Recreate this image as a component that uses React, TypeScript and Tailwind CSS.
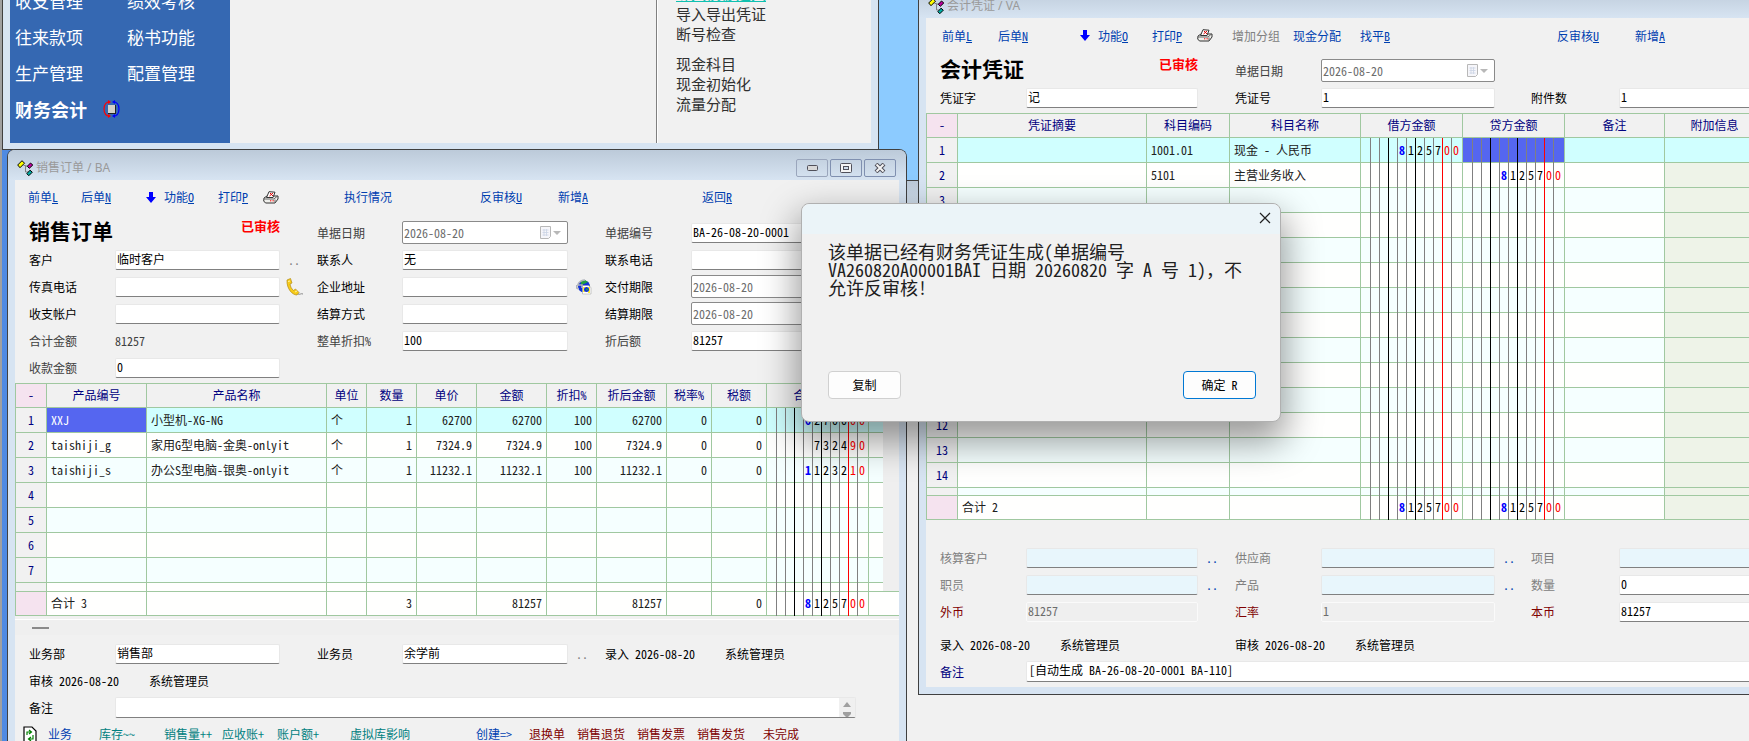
import type { ReactNode } from 'react';
import clsx from 'clsx';

const slotLines = [
  '', 'border-[#808080]', 'border-[#808080]', 'border-black', 'border-[#808080]', 'border-[#808080]',
  'border-black', 'border-[#808080]', 'border-[#808080]', 'border-[#ff0000]', 'border-[#808080]',
];

/* ---------- icons ---------- */

function NodesIcon() {
  return (
    <svg width="17" height="17" viewBox="0 0 17 17" className="shrink-0">
      <path d="M6.500 5.500h2v6.500h2.500M8.500 6h3" stroke="#808080" fill="none" />
      <path d="M5 .7l2.500 2.500L3 7.700.7 5z" fill="#ffff00" stroke="#000" />
      <path d="M13.500 3l2.300 2-3.500 3.300-2-2z" fill="#c000a0" stroke="#000" />
      <path d="M13 10.200l2.300 2-3.500 3.500-2-2z" fill="#00b0a8" stroke="#000" />
    </svg>
  );
}

function DownArrow() {
  return (
    <svg width="10" height="11" viewBox="0 0 10 11" className="shrink-0">
      <path d="M3 0h4v5h3L5 11 0 5h3z" fill="#0000ff" />
    </svg>
  );
}

function Printer() {
  return (
    <svg width="16" height="13" viewBox="0 0 16 13" className="shrink-0">
      <path d="M1 7l3-2h7l4 0v3l-3 4H2.500L.7 10z" fill="#f0f0ec" stroke="#333" />
      <path d="M3.500 6.500L6 .7l6 .5L10 6.500z" fill="#fff" stroke="#333" />
      <path d="M7 2l3 3M10 2L6.500 5" stroke="#e00000" />
      <path d="M1 8h10l3.500-3M12 8.500v3" stroke="#666" fill="none" />
      <path d="M7 9.800h1.300M9.500 9.800h1.300" stroke="#ff0000" />
    </svg>
  );
}

function PhoneIcon() {
  return (
    <svg width="18" height="18" viewBox="0 0 18 18">
      <path d="M1 2l3.500-1.500 1.500 4.500-2 1c.5 3 1.500 4.500 3.500 6.500l2-1.500 3.500 3.500-2 2.500C6.500 17 .5 11 1 2z" fill="#f8cc18" stroke="#b08a18" strokeWidth="0.700" />
      <path d="M2 3.500l2-.5M9 14l2-1" stroke="#fff3a0" />
      <path d="M12 16c2 1 3-1 5 0" stroke="#888" fill="none" />
    </svg>
  );
}

function GlobeIcon() {
  return (
    <svg width="16" height="16" viewBox="0 0 16 16">
      <path d="M1 6l4-4 7 0 2 4H1z" fill="#c8ccd4" />
      <circle cx="8" cy="7.500" r="6" fill="#1030d8" />
      <path d="M5 2l4-1 3 2-4 2-3 1z" fill="#20a040" />
      <path d="M.7 6v3l2 1M2 5c2-3 4-4 7-4M1 6h5v3" stroke="#b0b4bc" strokeWidth="1.500" fill="none" />
      <path d="M6.500 6.500h6l2.500 2v6.500H6.500z" fill="#fff" stroke="#999" strokeWidth="0.500" />
      <path d="M7 8h2v5H7zM12 8h2v6h-2z" fill="#ffee30" />
      <circle cx="10.500" cy="10.500" r="2.500" fill="#1030d8" />
      <circle cx="11" cy="10.500" r="1" fill="#20a040" />
    </svg>
  );
}

function TargetIcon() {
  return (
    <svg width="17" height="18" viewBox="0 0 17 18">
      <path d="M7 1.500C3 2 1 5 1 9s2 7 6 7.500" stroke="#ff0000" strokeWidth="1.200" fill="none" />
      <path d="M10 1.500c4 .5 6 3.500 6 7.500s-2 7-6 7.500" stroke="#0000ff" strokeWidth="1.200" fill="none" />
      <path d="M5 0l3 2-3 2zM5 14l3 2-3 2z" fill="#ff0000" />
      <path d="M12 0L9 2l3 2zM12 14l-3 2 3 2z" fill="#0000ff" />
      <rect x="5" y="5" width="8" height="9" fill="#222" />
      <rect x="5" y="5" width="7" height="8" fill="#d4d0c8" />
    </svg>
  );
}

function CalendarIcon() {
  return (
    <svg width="21" height="13" viewBox="0 0 21 13" className="mr-1.5 shrink-0">
      <path d="M.5.5h10v10l-2 2h-8z" fill="#f6f6fa" stroke="#b8b8b8" />
      <path d="M2.500 4h6M2.500 6.500h6M2.500 9h6M4 3v7M6.500 3v7" stroke="#ccd4e4" strokeWidth="0.800" />
      <path d="M13 5h8l-4 4z" fill="#b8b8b8" />
    </svg>
  );
}

function RefreshDoc() {
  return (
    <svg width="14" height="16" viewBox="0 0 14 16" className="shrink-0">
      <path d="M1 1h8l4 4v11H1z" fill="#fff" stroke="#000" strokeWidth="1.200" />
      <path d="M4 9V6h4M6 4l2.500 2L6 8M10 9v4H6M8 11l-2.500 2L8 15" stroke="#008000" strokeWidth="1.200" fill="none" />
    </svg>
  );
}

/* ---------- form parts ---------- */

function TextField({
  id,
  label,
  value = '',
  tone = 'text-black',
  look = 'white',
}: {
  id: string;
  label: string;
  value?: string;
  tone?: string;
  look?: 'white' | 'blue' | 'flat';
}) {
  return (
    <>
      <label htmlFor={id} className={tone}>{label}</label>
      <input
        id={id}
        defaultValue={value}
        className={clsx(
          'h-5 w-full rounded-xs border px-px pb-0.5 outline-none',
          look === 'white' && 'border-[#e8e8e8] border-b-[#808080] bg-white',
          look === 'blue' && 'border-[#e8e8e8] border-b-[#808080] bg-[#e8f6fc]',
          look === 'flat' && 'border-[#fafafa] bg-[#efefef] text-[#6d6d6d]',
        )}
      />
    </>
  );
}

function DateField({ id, label, tone = 'text-black' }: { id: string; label: string; tone?: string }) {
  return (
    <>
      <label htmlFor={id} className={tone}>{label}</label>
      <div className="flex h-[23px] items-center rounded-xs border border-[#8a8a8a] bg-white">
        <input id={id} defaultValue="2026-08-20" className="min-w-0 flex-1 px-px text-[#6d6d6d] outline-none" />
        <CalendarIcon />
      </div>
    </>
  );
}

function Dots({ className }: { className: string }) {
  return <button className={clsx('pl-2 text-left', className)}>..</button>;
}

/* a command with its access key underlined */
function Command({ text, hotkey, className }: { text: string; hotkey?: string; className?: string }) {
  return (
    <button className={clsx('shrink-0 text-left whitespace-nowrap', className)}>
      {text}
      {hotkey && <span className="underline">{hotkey}</span>}
    </button>
  );
}

function Titlebar({ children, buttons }: { children: ReactNode; buttons?: boolean }) {
  return (
    <div className="flex h-[30px] items-center gap-0.5 rounded-t-md bg-linear-to-b from-[#bccad9] to-[#d7e4f2] pt-1.5 pr-2.5 pl-[9px]">
      <NodesIcon />
      <h2 className="flex-1 text-[#9a9a9a] [font-family:'Noto_Sans','Noto_Sans_CJK_SC',sans-serif]">{children}</h2>
      {buttons && (
        <div className="flex gap-0.5">
          <button aria-label="最小化" className="flex h-[18px] w-8 items-center justify-center rounded-xs border border-[#9aa6bc]">
            <svg width="11" height="6"><rect x=".5" y=".5" width="10" height="5" rx="1" fill="#d8d8d8" stroke="#50505a" /></svg>
          </button>
          <button aria-label="最大化" className="flex h-[18px] w-8 items-center justify-center rounded-xs border border-[#8090b0]">
            <svg width="12" height="10">
              <rect x=".5" y=".5" width="11" height="9" rx="1" fill="#f4f4f4" stroke="#50505a" />
              <rect x="3.500" y="3.500" width="5" height="3" fill="#d0dcea" stroke="#50505a" />
            </svg>
          </button>
          <button aria-label="关闭" className="flex h-[18px] w-8 items-center justify-center rounded-xs border border-[#8090b0]">
            <svg width="12" height="10">
              <path d="M2 1l8 8M10 1L2 9" stroke="#50505a" strokeWidth="4" />
              <path d="M2.500 1.500l7 7M9.500 1.500l-7 7" stroke="#f4f4f4" strokeWidth="2" />
            </svg>
          </button>
        </div>
      )}
    </div>
  );
}

function DocTitle({ children }: { children: ReactNode }) {
  return (
    <h1 className="col-span-2 flex justify-between self-start text-[21px] leading-[22px] font-bold text-black">
      {children}
      <span className="text-[13px] leading-3.5 text-[#ff0000]">已审核</span>
    </h1>
  );
}

/* ---------- ledger grid ---------- */

/* amount split into ruled digit slots, last two are jiao and fen */
function MoneyCell({ value = '', height, bg }: { value?: string; height: string; bg?: string }) {
  const digits = value.replace('.', '').padStart(11, ' ').split('');
  return (
    <td className={clsx('border-r border-[#a0c8a0] p-0', bg)}>
      <div className="flex">
        {digits.map((d, i) => (
          <span key={i} className={clsx('w-[9px] text-center last:w-[11px]', i > 0 && 'border-l', slotLines[i])}>
            <span
              className={clsx(
                'flex items-center border-b border-[#a0c8a0]',
                height,
                i > 8 ? 'text-[#ff0000]' : i === 4 ? 'font-bold text-[#0000ff]' : 'text-black',
              )}
            >
              <span className="w-2 pb-px">{d}</span>
            </span>
          </span>
        ))}
      </div>
    </td>
  );
}

const cell = 'border-r border-b border-[#a0c8a0] truncate';
const head = 'border-r border-b border-[#a0c8a0] pb-0.5 font-normal text-[#000080]';

const orderColumns = [
  { name: '产品编号', width: 'w-[100px]' },
  { name: '产品名称', width: 'w-[180px]' },
  { name: '单位', width: 'w-10' },
  { name: '数量', width: 'w-[50px]' },
  { name: '单价', width: 'w-[60px]' },
  { name: '金额', width: 'w-[70px]' },
  { name: '折扣%', width: 'w-[50px]' },
  { name: '折后金额', width: 'w-[70px]' },
  { name: '税率%', width: 'w-[45px]' },
  { name: '税额', width: 'w-[55px]' },
  { name: '合计金额', width: 'w-[102px]' },
];

const orderRows = [
  { cells: ['XXJ', '小型机-XG-NG', '个', '1', '62700', '62700', '100', '62700', '0', '0'], total: '62700.00' },
  { cells: ['taishiji_g', '家用G型电脑-金奥-onlyit', '个', '1', '7324.9', '7324.9', '100', '7324.9', '0', '0'], total: '7324.90' },
  { cells: ['taishiji_s', '办公S型电脑-银奥-onlyit', '个', '1', '11232.1', '11232.1', '100', '11232.1', '0', '0'], total: '11232.10' },
];

const orderTotals = ['合计 3', '', '', '3', '', '81257', '', '81257', '', '0'];

function rowTint(i: number) {
  if (i === 0) return 'bg-[#d0ffff]';
  return i % 2 === 0 ? 'bg-[#f5ffff]' : 'bg-[#fffffe]';
}

function OrderGrid() {
  return (
    <table className="w-full table-fixed border-separate border-spacing-0 border-t border-l border-[#a0c8a0]">
      <thead>
        <tr className="h-6">
          <th className={clsx(head, 'w-[31px] bg-[#f5e3ef]')}>-</th>
          {orderColumns.map((c) => (
            <th key={c.name} className={clsx(head, c.width)}>{c.name}</th>
          ))}
          <th className="w-3.5 border-b border-[#a0c8a0]" />
          <th className="border-b border-[#a0c8a0]" />
        </tr>
      </thead>
      <tbody className="text-[#202020]">
        {Array.from({ length: 7 }).map((_, r) => (
          <tr key={r} className={clsx('h-[25px]', rowTint(r))}>
            <td className={clsx(cell, 'bg-[#f1f1f1] text-center text-[#000080]')}>{r + 1}</td>
            {orderColumns.slice(0, 10).map((c, i) => (
              <td
                key={c.name}
                className={clsx(cell, 'px-1', i > 2 && 'text-right', r === 0 && i === 0 && 'bg-[#5566f0] text-white')}
              >
                {orderRows[r]?.cells[i]}
              </td>
            ))}
            <MoneyCell value={orderRows[r]?.total} height="h-[25px]" />
            <td className="border-b border-[#a0c8a0]" />
            {r === 0 && <td rowSpan={8} className="border-b border-[#a0c8a0] bg-[#efefef]" />}
          </tr>
        ))}
        <tr className="h-[9px] bg-[#fffffe]">
          <td className={clsx(cell, 'bg-[#f1f1f1]')} />
          {orderColumns.slice(0, 10).map((c) => <td key={c.name} className={cell} />)}
          <MoneyCell height="h-[9px]" />
          <td className="border-b border-[#a0c8a0]" />
        </tr>
      </tbody>
      <tfoot className="bg-[#fffffe] text-[#202020]">
        <tr className="h-6">
          <td className={clsx(cell, 'bg-[#f5e3ef]')} />
          {orderTotals.map((t, i) => (
            <td key={i} className={clsx(cell, 'px-1 pb-0.5', i > 2 && 'text-right')}>{t}</td>
          ))}
          <MoneyCell value="81257.00" height="h-6" />
          <td colSpan={2} className="border-b border-[#a0c8a0]" />
        </tr>
      </tfoot>
    </table>
  );
}

const voucherColumns = [
  { name: '凭证摘要', width: 'w-[189px]' },
  { name: '科目编码', width: 'w-[83px]' },
  { name: '科目名称', width: 'w-[131px]' },
  { name: '借方金额', width: 'w-[102px]' },
  { name: '贷方金额', width: 'w-[102px]' },
  { name: '备注', width: 'w-[100px]' },
  { name: '附加信息', width: 'w-[100px]' },
];

const voucherRows = [
  { code: '1001.01', name: '现金 - 人民币', debit: '81257.00', credit: '' },
  { code: '5101', name: '主营业务收入', debit: '', credit: '81257.00' },
];

function VoucherGrid() {
  return (
    <table className="w-[839px] table-fixed border-separate border-spacing-0 border-t border-l border-[#a0c8a0]">
      <thead>
        <tr className="h-6">
          <th className={clsx(head, 'w-[31px] bg-[#f5e3ef]')}>-</th>
          {voucherColumns.map((c) => (
            <th key={c.name} className={clsx(head, c.width)}>{c.name}</th>
          ))}
        </tr>
      </thead>
      <tbody className="text-[#202020]">
        {Array.from({ length: 14 }).map((_, r) => (
          <tr key={r} className={clsx('h-[25px]', rowTint(r))}>
            <td className={clsx(cell, 'bg-[#f1f1f1] text-center text-[#000080]')}>{r + 1}</td>
            <td className={cell} />
            <td className={clsx(cell, 'px-1')}>{voucherRows[r]?.code}</td>
            <td className={clsx(cell, 'px-1')}>{voucherRows[r]?.name}</td>
            <MoneyCell value={voucherRows[r]?.debit} height="h-[25px]" />
            <MoneyCell value={voucherRows[r]?.credit} height="h-[25px]" bg={r === 0 ? 'bg-[#5566f0]' : undefined} />
            <td className={cell} />
            <td className={clsx(cell, r > 0 && 'bg-[#eef3e8]')} />
          </tr>
        ))}
        <tr className="h-2 bg-[#f5ffff]">
          <td className={clsx(cell, 'bg-[#f1f1f1]')} />
          <td className={cell} />
          <td className={cell} />
          <td className={cell} />
          <MoneyCell height="h-2" />
          <MoneyCell height="h-2" />
          <td className={cell} />
          <td className={clsx(cell, 'bg-[#eef3e8]')} />
        </tr>
      </tbody>
      <tfoot className="bg-[#fffffe] text-[#202020]">
        <tr className="h-6">
          <td className={clsx(cell, 'bg-[#f5e3ef]')} />
          <td className={clsx(cell, 'px-1 pb-0.5')}>合计 2</td>
          <td className={cell} />
          <td className={cell} />
          <MoneyCell value="81257.00" height="h-6" />
          <MoneyCell value="81257.00" height="h-6" />
          <td className={cell} />
          <td className={clsx(cell, 'bg-[#eef3e8]')} />
        </tr>
      </tfoot>
    </table>
  );
}

/* ---------- windows ---------- */

function MenuWindow() {
  return (
    <section className="absolute -top-10 left-0.5 w-[877px] border border-[#404040] bg-[#d7e4f2] px-[7px] pb-1.5">
      <div className="flex h-[182px] bg-[#f1f1f1]">
        <nav className="grid w-[220px] grid-cols-[112px_1fr] content-end bg-[#3568b2] pb-4 pl-[5px] text-[17px] text-white">
          {['收支管理', '绩效考核', '往来款项', '秘书功能', '生产管理', '配置管理'].map((t) => (
            <button key={t} className="h-9 text-left font-light">{t}</button>
          ))}
          <button className="h-9 text-left text-[18px] font-bold">财务会计</button>
          <span className="-ml-6 flex items-center"><TargetIcon /></span>
        </nav>
        <div className="flex-1 border-r border-[#808080]" />
        <ul className="flex w-[214px] flex-col justify-end border-l border-white pb-[29px] pl-[18px] text-[15px] leading-5 text-[#303030]">
          <li><a href="#quick" className="text-[#10c0b0] underline">导入快捷建入</a></li>
          <li><a href="#voucher">导入导出凭证</a></li>
          <li className="mb-2.5"><a href="#gaps">断号检查</a></li>
          <li><a href="#subject">现金科目</a></li>
          <li><a href="#init">现金初始化</a></li>
          <li><a href="#flow">流量分配</a></li>
        </ul>
      </div>
    </section>
  );
}

function OrderWindow() {
  const grid = 'grid auto-rows-[27px] grid-cols-[86px_165px_37px_85px_166px_37px_86px_165px] items-center pl-3.5';
  return (
    <section className="absolute top-[149px] left-[7px] w-[900px] rounded-t-lg border border-b-0 border-[#404040] bg-[#d7e4f2]">
      <Titlebar buttons>销售订单 / BA</Titlebar>
      <div className="mx-[7px] bg-[#f1f1f1]">
        <div className="mb-[3px] flex h-9 items-center pb-0.5 pl-[13px] text-[#0040b0]">
          <Command text="前单" hotkey="L" className="w-[53px]" />
          <Command text="后单" hotkey="N" className="w-[65px]" />
          <span className="w-[18px]"><DownArrow /></span>
          <Command text="功能" hotkey="O" className="w-[54px]" />
          <Command text="打印" hotkey="P" className="w-[45px]" />
          <button aria-label="打印机" className="w-[81px]"><Printer /></button>
          <Command text="执行情况" className="w-[136px]" />
          <Command text="反审核" hotkey="U" className="w-[78px]" />
          <Command text="新增" hotkey="A" className="w-36" />
          <Command text="返回" hotkey="R" />
        </div>

        <div className={clsx(grid, 'pb-0.5')}>
          <DocTitle>销售订单</DocTitle>
          <span />
          <DateField id="order-date" label="单据日期" tone="text-[#404040]" />
          <span />
          <TextField id="order-no" label="单据编号" value="BA-26-08-20-0001" tone="text-[#404040]" />

          <TextField id="customer" label="客户" value="临时客户" />
          <Dots className="text-[#808080]" />
          <TextField id="contact" label="联系人" value="无" />
          <span />
          <TextField id="phone" label="联系电话" />

          <TextField id="fax" label="传真电话" />
          <button aria-label="拨号" className="pl-1.5"><PhoneIcon /></button>
          <TextField id="address" label="企业地址" />
          <button aria-label="地图" className="pl-2"><GlobeIcon /></button>
          <DateField id="deliver" label="交付期限" />

          <TextField id="account" label="收支帐户" />
          <span />
          <TextField id="settle" label="结算方式" />
          <span />
          <DateField id="settle-date" label="结算期限" />

          <span className="text-[#404040]">合计金额</span>
          <output className="text-[#404040]">81257</output>
          <span />
          <TextField id="discount" label="整单折扣%" value="100" tone="text-[#404040]" />
          <span />
          <TextField id="after" label="折后额" value="81257" tone="text-[#404040]" />

          <TextField id="received" label="收款金额" value="0" tone="text-[#404040]" />
        </div>

        <OrderGrid />

        <div className="mt-[3px] mb-[5px] flex h-4 items-center border-t border-white bg-[#efefef] pl-[17px]">
          <span className="h-0.5 w-[17px] bg-[#8a8a8a]" />
        </div>

        <div className={grid}>
          <TextField id="dept" label="业务部" value="销售部" />
          <span />
          <TextField id="clerk" label="业务员" value="余学前" />
          <Dots className="text-[#808080]" />
          <p className="col-span-2 flex gap-[30px]"><span>录入 2026-08-20</span><span>系统管理员</span></p>
          <p className="col-span-8 flex gap-[30px]"><span>审核 2026-08-20</span><span>系统管理员</span></p>
          <label htmlFor="memo">备注</label>
          <div className="col-span-7 flex h-[21px] rounded-xs border border-[#e8e8e8] border-b-[#808080] bg-white">
            <input id="memo" className="min-w-0 flex-1 outline-none" />
            <div className="flex w-4 flex-col items-center justify-between bg-[#f0f0f0] pt-1">
              <svg width="8" height="5"><path d="M0 5l4-5 4 5z" fill="#a0a0a0" /></svg>
              <svg width="8" height="5"><path d="M0 0h8v2L5 5H3L0 2z" fill="#a0a0a0" /></svg>
            </div>
          </div>
        </div>

        <div className="flex h-[26px] items-center pl-2 text-[#008080]">
          <span className="w-[25px]"><RefreshDoc /></span>
          <Command text="业务" className="w-[51px] text-[#0040b0]" />
          <Command text="库存~~" className="w-[65px]" />
          <Command text="销售量++" className="w-[58px]" />
          <Command text="应收账+" className="w-[55px]" />
          <Command text="账户额+" className="w-[73px]" />
          <Command text="虚拟库影响" className="w-[126px]" />
          <Command text="创建=>" className="w-[53px] text-[#0040b0]" />
          <Command text="退换单" className="w-12 text-[#800000]" />
          <Command text="销售退货" className="w-[60px] text-[#800000]" />
          <Command text="销售发票" className="w-[60px] text-[#800000]" />
          <Command text="销售发货" className="w-[66px] text-[#800000]" />
          <Command text="未完成" className="text-[#800000]" />
        </div>
      </div>
    </section>
  );
}

function VoucherWindow() {
  const grid = 'grid auto-rows-[27px] grid-cols-[86px_172px_37px_86px_174px_36px_88px_172px] items-center pl-3.5';
  return (
    <section className="absolute -top-[13px] -right-14 left-[918px] border border-[#404040] bg-[#d7e4f2] pb-[7px]">
      <Titlebar>会计凭证 / VA</Titlebar>
      <div className="mx-[7px] overflow-hidden bg-[#f1f1f1] pb-0.5">
        <div className="mb-[3px] flex h-9 items-center pb-px pl-4 text-[#0040b0]">
          <Command text="前单" hotkey="L" className="w-14" />
          <Command text="后单" hotkey="N" className="w-[82px]" />
          <span className="w-[18px]"><DownArrow /></span>
          <Command text="功能" hotkey="O" className="w-[54px]" />
          <Command text="打印" hotkey="P" className="w-[45px]" />
          <button aria-label="打印机" className="w-[35px]"><Printer /></button>
          <Command text="增加分组" className="w-[61px] text-[#808080]" />
          <Command text="现金分配" className="w-[67px]" />
          <Command text="找平" hotkey="B" className="w-[197px]" />
          <Command text="反审核" hotkey="U" className="w-[78px]" />
          <Command text="新增" hotkey="A" />
        </div>

        <div className={clsx(grid, 'pb-0.5')}>
          <DocTitle>会计凭证</DocTitle>
          <span />
          <DateField id="voucher-date" label="单据日期" tone="text-[#404040]" />
          <span className="col-span-3" />

          <TextField id="word" label="凭证字" value="记" />
          <span />
          <TextField id="number" label="凭证号" value="1" />
          <span />
          <TextField id="attach" label="附件数" value="1" />
        </div>

        <VoucherGrid />

        <div className={clsx(grid, 'pt-6 pb-1.5')}>
          <TextField id="v-customer" label="核算客户" look="blue" tone="text-[#808080]" />
          <Dots className="text-[#0040b0]" />
          <TextField id="v-supplier" label="供应商" look="blue" tone="text-[#808080]" />
          <Dots className="text-[#0040b0]" />
          <TextField id="v-project" label="项目" look="blue" tone="text-[#808080]" />

          <TextField id="v-staff" label="职员" look="blue" tone="text-[#808080]" />
          <Dots className="text-[#0040b0]" />
          <TextField id="v-product" label="产品" look="blue" tone="text-[#808080]" />
          <Dots className="text-[#0040b0]" />
          <TextField id="v-qty" label="数量" value="0" tone="text-[#808080]" />

          <TextField id="v-foreign" label="外币" value="81257" look="flat" tone="text-[#800000]" />
          <span />
          <TextField id="v-rate" label="汇率" value="1" look="flat" tone="text-[#800000]" />
          <span />
          <TextField id="v-local" label="本币" value="81257" tone="text-[#800000]" />
        </div>
        <div className={grid}>
          <p className="col-span-3 flex gap-[30px]"><span>录入 2026-08-20</span><span>系统管理员</span></p>
          <p className="col-span-5 flex gap-[30px]"><span>审核 2026-08-20</span><span>系统管理员</span></p>
          <label htmlFor="v-memo" className="text-[#000080]">备注</label>
          <input
            id="v-memo"
            defaultValue="[自动生成 BA-26-08-20-0001 BA-110]"
            className="col-span-7 h-[21px] rounded-xs border border-[#e8e8e8] border-b-[#808080] bg-white px-0.5 pb-1 outline-none"
          />
        </div>
      </div>
    </section>
  );
}

function MessageDialog() {
  return (
    <section
      role="alertdialog"
      aria-labelledby="message"
      className="absolute top-[203px] left-[801px] w-[480px] rounded-lg border border-[#b0b0b0] bg-[#f1f1f1] shadow-[0_16px_36px_4px_rgba(0,0,0,0.4)]"
    >
      <div className="flex h-[30px] justify-end rounded-t-lg bg-[#ebf4f8] pt-2 pr-[9px]">
        <button aria-label="关闭" className="h-3">
          <svg width="12" height="12"><path d="M1 1l10 10M11 1L1 11" stroke="#202020" strokeWidth="1.200" /></svg>
        </button>
      </div>
      <div className="pt-2 pr-6 pb-[22px] pl-[26px]">
        <p id="message" className="h-[129px] text-[18px] leading-[18px] font-light text-[#202020]">
          该单据已经有财务凭证生成(单据编号
          <br />
          VA260820A00001BAI 日期 20260820 字 A 号 1)，不
          <br />
          允许反审核!
        </p>
        <div className="flex justify-between">
          <button className="h-7 w-[73px] rounded border border-[#d0d0d0] bg-[#fdfdfd]">复制</button>
          <button className="h-7 w-[73px] rounded border border-[#0078d4] bg-[#fdfdfd]">确定 R</button>
        </div>
      </div>
    </section>
  );
}

export default function App() {
  return (
    <main className="relative h-screen w-full overflow-hidden bg-linear-to-r from-[#4f8ae2] to-[#8ccbff] to-50% text-[12px] leading-4 text-black shadow-[inset_2px_0_0_#a0a0a0] [font-family:'Noto_Sans_Mono_CJK_SC','Noto_Sans_CJK_SC',monospace]">
      <section className="absolute top-[180px] -right-2 -bottom-2 left-40 border border-[#404040] bg-[#f1f1f1]">
        <div className="h-[30px] bg-linear-to-b from-[#bccad9] to-[#d7e4f2]" />
      </section>
      <MenuWindow />
      <OrderWindow />
      <VoucherWindow />
      <MessageDialog />
    </main>
  );
}
